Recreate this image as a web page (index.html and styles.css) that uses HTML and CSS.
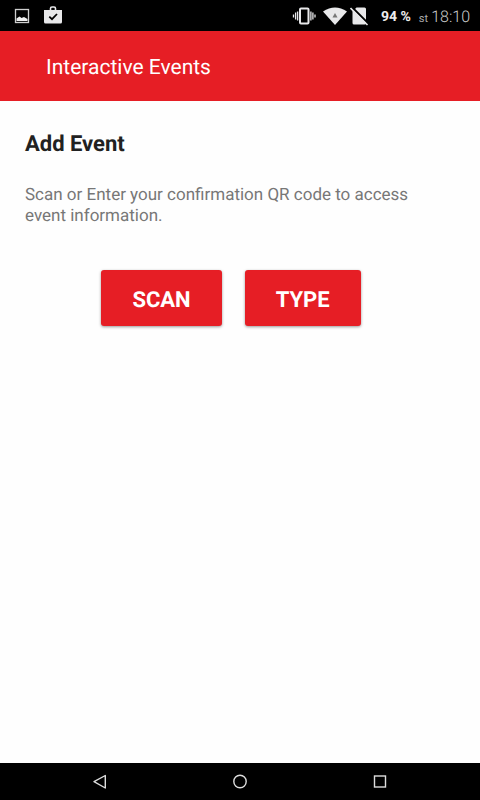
FILE: index.html
```html
<!DOCTYPE html>
<html lang="en">
<head>
<meta charset="utf-8">
<meta name="viewport" content="width=device-width, initial-scale=1">
<title>Interactive Events</title>
<link rel="stylesheet" href="styles.css">
</head>
<body>
<div class="status-bar">
  <div class="status-icons notifications">
    <svg width="16" height="16" viewBox="0 0 16 16" role="img" aria-label="Screenshot saved">
      <rect x="1.500" y="1.500" width="13" height="13" fill="none" stroke="#cfcfcf" stroke-width="1.3"/>
      <path d="M2.500 13V10.500L5.500 8.500L7.500 10L10 9L13.500 11V13Z" fill="#eee"/>
    </svg>
    <svg width="20" height="20" viewBox="0 0 20 20" role="img" aria-label="Apps updated">
      <path d="M6.500 5V2.500Q6.500 1 8 1H10Q11.500 1 11.500 2.500V5" fill="none" stroke="#e8e8ea" stroke-width="1.600"/>
      <path d="M0 4H18V16Q18 17.500 16.500 17.500H1.500Q0 17.500 0 16Z" fill="#e8e8ea"/>
      <path d="M5.300 10.600L8 13.200L13 8" fill="none" stroke="#000" stroke-width="1.800"/>
    </svg>
  </div>
  <div class="status-icons system">
    <svg width="24" height="20" viewBox="0 0 24 20" role="img" aria-label="Vibrate">
      <rect x="8" y="2.500" width="8.500" height="15" rx="1" fill="none" stroke="#e8e8ea" stroke-width="2"/>
      <path d="M1.500 8.500V11.500M3.600 6.500V13.500M5.600 5.500V14.500M18.900 5.500V14.500M20.900 6.500V13.500M23 8.500V11.500" fill="none" stroke="#e8e8ea" stroke-width="1.300"/>
    </svg>
    <svg class="wifi" width="24" height="20" viewBox="0 0 24 20" role="img" aria-label="Wi-Fi">
      <path d="M0 5.500Q12-2.500 24 5.500L12 19Z" fill="#e8e8ea"/>
      <path d="M12 7L14.500 11.500H9.500Z" fill="#777"/>
    </svg>
    <svg width="20" height="20" viewBox="0 0 20 20" role="img" aria-label="No SIM card">
      <path d="M2.500 5.500L6.500 1.500H14.500Q16 1.500 16 3V17Q16 18.500 14.500 18.500H4Q2.500 18.500 2.500 17Z" fill="#e8e8ea"/>
      <path d="M1.800 1L18.800 18" stroke="#000" stroke-width="2"/>
      <path d="M.5 2L17.500 19" stroke="#e8e8ea" stroke-width="1.600"/>
    </svg>
    <span class="battery">94 %</span>
    <span class="day">st</span>
    <time class="clock">18:10</time>
  </div>
</div>
<header class="app-bar">Interactive Events</header>
<main class="content">
  <h1 class="title">Add Event</h1>
  <p class="hint">Scan or Enter your confirmation QR code to access event information.</p>
  <div class="actions">
    <button class="action" type="button">SCAN</button>
    <button class="action" type="button">TYPE</button>
  </div>
</main>
<nav class="nav-bar" aria-label="System navigation">
  <button class="nav-button" type="button" aria-label="Back">
    <svg width="16" height="16" viewBox="0 0 16 16"><path d="M13.300 1.500V14L2 7.700Z" fill="none" stroke="#ddd" stroke-width="1.400" stroke-linejoin="round"/></svg>
  </button>
  <button class="nav-button" type="button" aria-label="Home">
    <svg width="16" height="16" viewBox="0 0 16 16"><circle cx="8" cy="7.500" r="6.200" fill="none" stroke="#ddd" stroke-width="1.400"/></svg>
  </button>
  <button class="nav-button" type="button" aria-label="Recent apps">
    <svg width="16" height="16" viewBox="0 0 16 16"><rect x="2.500" y="2" width="11" height="11" fill="none" stroke="#ddd" stroke-width="1.400"/></svg>
  </button>
</nav>
</body>
</html>
```
FILE: styles.css
```css
* {
  box-sizing: border-box;
}

body {
  margin: 0;
  min-height: 100vh;
  display: flex;
  flex-direction: column;
  background: #fefefe;
  font-family: Roboto, "Liberation Sans", sans-serif;
  text-rendering: geometricPrecision;
}

svg {
  display: block;
}

.status-bar {
  display: flex;
  justify-content: space-between;
  align-items: center;
  height: 31px;
  padding: 0 10px 0 14px;
  background: #000;
  color: #eee;
}

.status-icons {
  display: flex;
  align-items: center;
}

.notifications {
  gap: 14px;
}

.wifi {
  margin: 0 3px 0 7px;
}

.battery {
  margin: 2px 8px 0 11px;
  font-size: 14px;
  font-weight: 700;
}

.day {
  margin: 5px 3px 0 0;
  font-size: 11px;
  color: #aaa;
}

.clock {
  margin-top: 2px;
  font-size: 16px;
  font-weight: 300;
  color: #ccc;
}

.app-bar {
  display: flex;
  align-items: center;
  height: 70px;
  padding: 4px 46px 0;
  background: #e61e25;
  color: #fff;
  font-size: 21px;
}

.content {
  flex: 1;
  padding: 30px 43px 30px 25px;
}

.title {
  margin: 0;
  font-size: 22px;
  line-height: 28px;
  color: #212121;
}

.hint {
  margin: 26px 0 0;
  font-size: 17px;
  line-height: 21px;
  color: #777;
}

.actions {
  display: flex;
  justify-content: center;
  gap: 23px;
  margin-top: 43px;
}

.action {
  height: 56px;
  padding: 4px 31px 0;
  border: 0;
  border-radius: 3px;
  background: #e61e25;
  box-shadow: 0 1px 3px rgba(0, 0, 0, 0.4);
  color: #fff;
  font: 700 22px Roboto, "Liberation Sans", sans-serif;
  text-rendering: inherit;
}

.nav-bar {
  display: flex;
  justify-content: center;
  gap: 92px;
  height: 37px;
  background: #000;
}

.nav-button {
  display: grid;
  place-items: center;
  width: 48px;
  padding: 0;
  border: 0;
  background: none;
}
```
